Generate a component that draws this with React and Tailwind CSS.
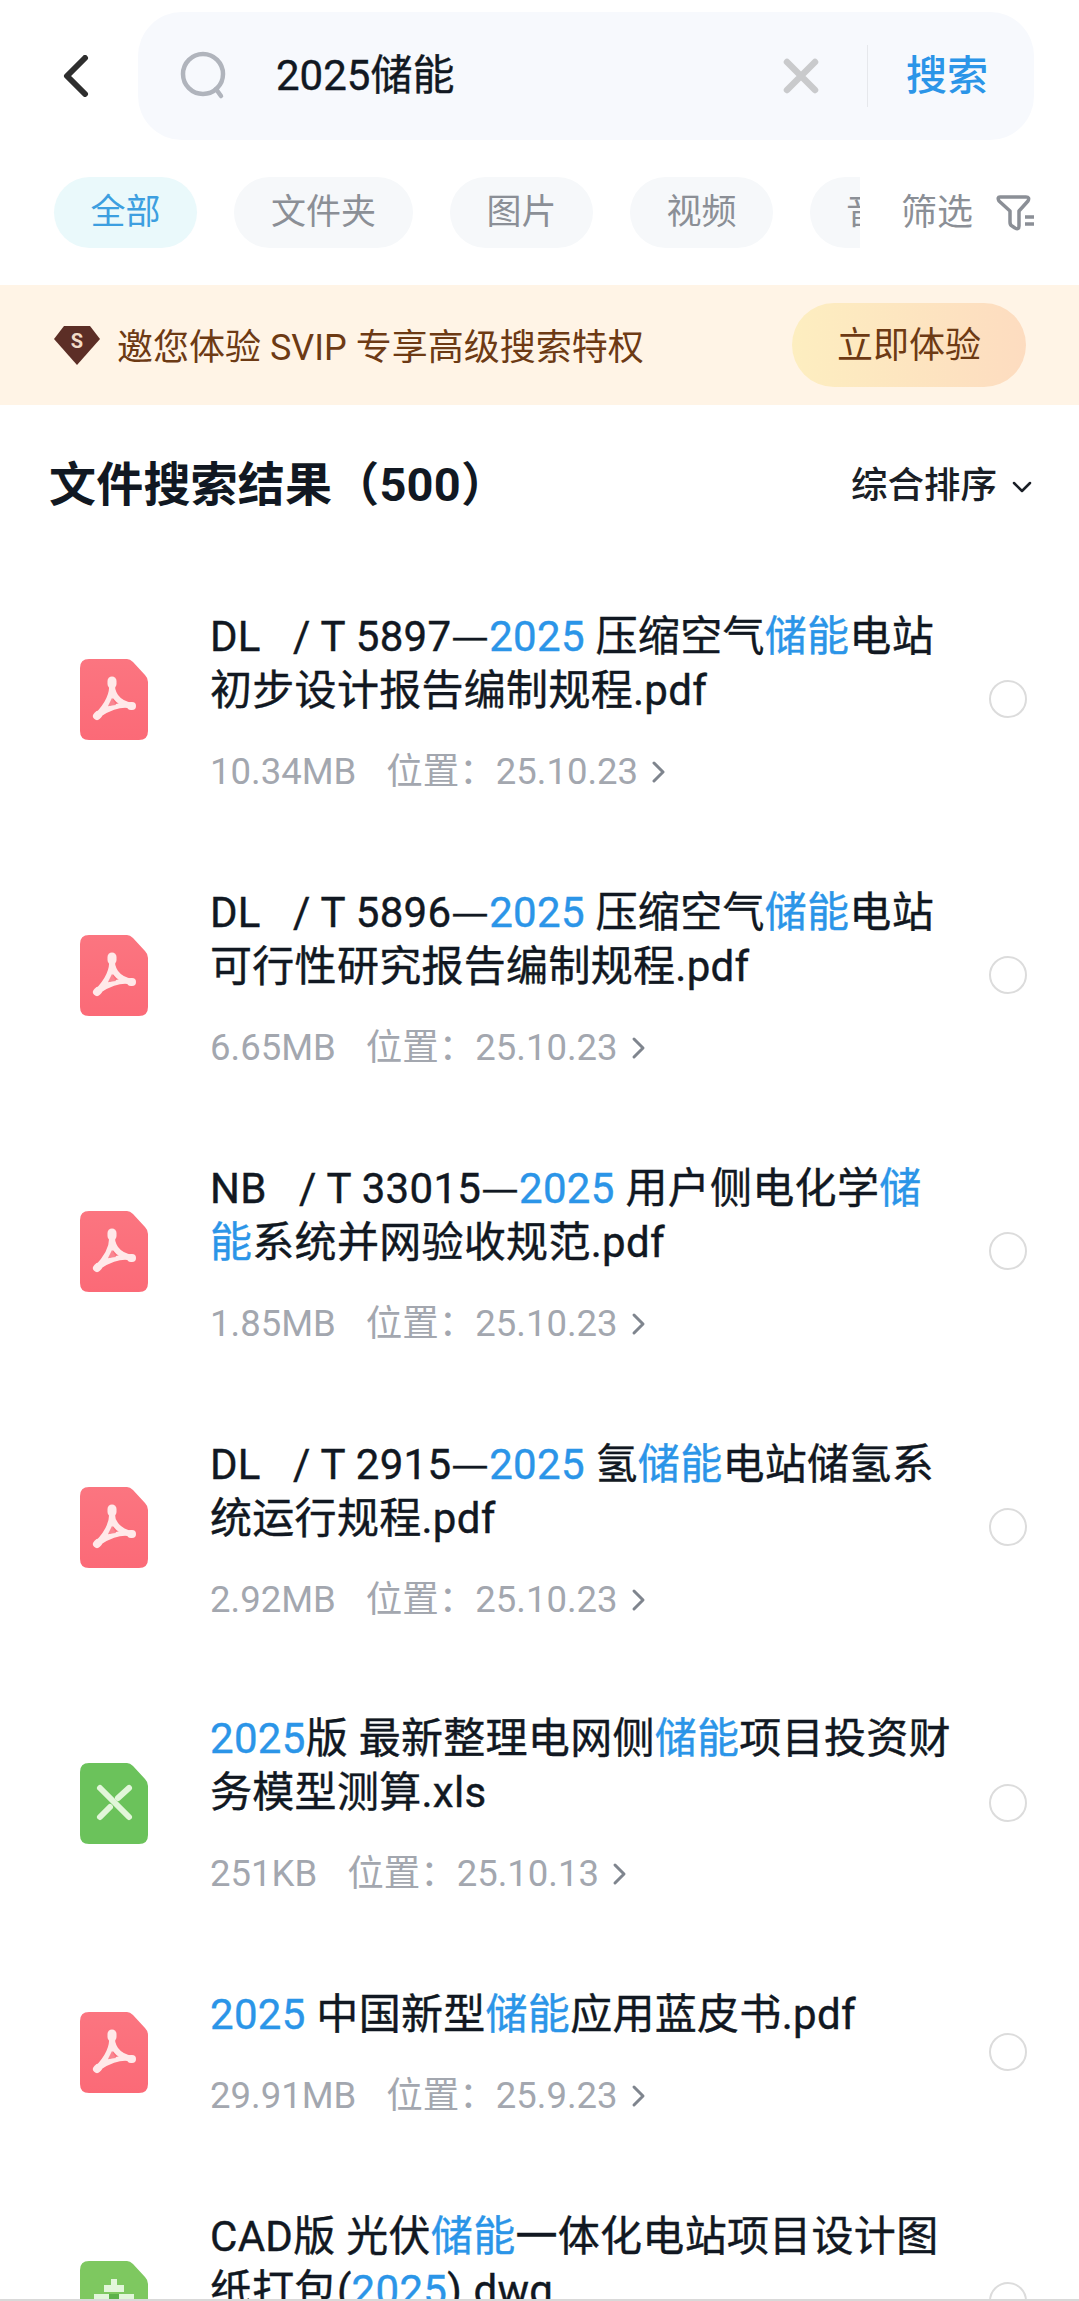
import React from "react";

const B = ({ children }) => <span className="text-[#2b95e8]">{children}</span>;
const D = () => <span className="font-['Noto_Sans_CJK_SC',sans-serif]">—</span>;

const Pdf = () => (
  <svg width="68" height="81" viewBox="0 0 68 81" className="block">
    <defs>
      <linearGradient id="pg" x1="0" y1="0" x2="0" y2="1">
        <stop offset="0" stopColor="#fb7580" />
        <stop offset="1" stopColor="#fb6a77" />
      </linearGradient>
    </defs>
    <path d="M9 0H47Q50 0 53 3L65 16Q68 19 68 23V72Q68 81 59 81H9Q0 81 0 72V9Q0 0 9 0Z" fill="url(#pg)" />
    <g fill="none" stroke="#ffe9e9" strokeLinecap="round">
      <path d="M32 24C33 33 30 44 17 57" strokeWidth="6" />
      <path d="M32 24C31 33 36 44 52 47" strokeWidth="6" />
      <path d="M17 57C26 50 40 44 52 47" strokeWidth="5" />
      <path d="M32 22V25" strokeWidth="9" />
      <path d="M17 57L18 56" strokeWidth="8" />
      <path d="M51 47L52 47" strokeWidth="8" />
    </g>
    <path d="M32 39L36 46L28 47Z" fill="#f98590" />
  </svg>
);

const Xls = () => (
  <svg width="68" height="81" viewBox="0 0 68 81" className="block">
    <path d="M9 0H47Q50 0 53 3L65 16Q68 19 68 23V72Q68 81 59 81H9Q0 81 0 72V9Q0 0 9 0Z" fill="#6bc25b" />
    <g fill="none" stroke="#e2f6da" strokeWidth="6" strokeLinecap="round">
      <path d="M20 25L49 54" />
      <path d="M49 25L38 35" />
      <path d="M30 44L20 54" />
    </g>
  </svg>
);

const Cad = () => (
  <svg width="68" height="81" viewBox="0 0 68 81" className="block">
    <path d="M9 0H47Q50 0 53 3L65 16Q68 19 68 23V72Q68 81 59 81H9Q0 81 0 72V9Q0 0 9 0Z" fill="#7ec860" />
    <path d="M31 18H37V24H44V31H24V24H31Z" fill="#e2f6da" />
    <path d="M14 33H54V45H14Z" fill="#e2f6da" />
    <path d="M29 33H39V45H29Z" fill="#5cb14a" />
  </svg>
);

const rows = [
  {
    icon: <Pdf />,
    lines: [<>DL   / T 5897<D /><B>2025</B> 压缩空气<B>储能</B>电站</>, <>初步设计报告编制规程.pdf</>],
    size: "10.34MB",
    date: "25.10.23",
  },
  {
    icon: <Pdf />,
    lines: [<>DL   / T 5896<D /><B>2025</B> 压缩空气<B>储能</B>电站</>, <>可行性研究报告编制规程.pdf</>],
    size: "6.65MB",
    date: "25.10.23",
  },
  {
    icon: <Pdf />,
    lines: [<>NB   / T 33015<D /><B>2025</B> 用户侧电化学<B>储</B></>, <><B>能</B>系统并网验收规范.pdf</>],
    size: "1.85MB",
    date: "25.10.23",
  },
  {
    icon: <Pdf />,
    lines: [<>DL   / T 2915<D /><B>2025</B> 氢<B>储能</B>电站储氢系</>, <>统运行规程.pdf</>],
    size: "2.92MB",
    date: "25.10.23",
  },
  {
    icon: <Xls />,
    lines: [<><B>2025</B>版 最新整理电网侧<B>储能</B>项目投资财</>, <>务模型测算.xls</>],
    size: "251KB",
    date: "25.10.13",
  },
  {
    icon: <Pdf />,
    lines: [<><B>2025</B> 中国新型<B>储能</B>应用蓝皮书.pdf</>],
    size: "29.91MB",
    date: "25.9.23",
  },
  {
    icon: <Cad />,
    lines: [<>CAD版 光伏<B>储能</B>一体化电站项目设计图</>, <>纸打包(<B>2025</B>).dwg</>],
    size: "",
    date: "",
  },
];

const Row = ({ r }) => (
  <div className={`flex items-center pl-[80px] pr-[52px] shrink-0 ${r.lines.length === 2 ? "h-[276px]" : "h-[222px]"}`}>
    <div className="w-[68px] shrink-0">{r.icon}</div>
    <div className="ml-[62px] flex-1 min-w-0">
      {r.lines.map((l, i) => (
        <div key={i} className="text-[42px] leading-[54px] tracking-[0.3px] [-webkit-text-stroke:0.4px] text-[#111822] whitespace-pre">{l}</div>
      ))}
      <div className="mt-[34px] h-[40px] flex items-center text-[36.5px] leading-[40px] text-[#a3a7af] whitespace-nowrap">
        <span>{r.size}</span>
        <span className="ml-[30px]">位置：{r.date}</span>
        <svg width="18" height="26" viewBox="0 0 18 26" className="ml-[12px]">
          <path d="M4 4L13 13L4 22" fill="none" stroke="#7f858e" strokeWidth="3" strokeLinecap="round" strokeLinejoin="round" />
        </svg>
      </div>
    </div>
    <div className="w-[38px] h-[38px] rounded-full border-[2px] border-[#dcdcdc] shrink-0" />
  </div>
);

const Chip = ({ active, children, w }) => (
  <div className={`h-[71px] rounded-[36px] shrink-0 flex items-center justify-center pt-[2px] text-[35px] whitespace-nowrap overflow-hidden ${w} ${active ? "bg-[#eaf9fb] text-[#3d9fe0]" : "bg-[#f6f8fa] text-[#8b8f96]"}`}>
    {children}
  </div>
);

export default function App() {
  return (
    <div className="relative w-[1079px] h-[2301px] overflow-hidden bg-white flex flex-col font-['Roboto','Noto_Sans_CJK_SC',sans-serif]">
      <div className="h-[177px] shrink-0 pt-[12px] flex items-start">
        <div className="w-[138px] h-[128px] shrink-0 flex items-center pl-[62px]">
          <svg width="28" height="42" viewBox="0 0 28 42">
            <path d="M23 3L5 21L23 39" fill="none" stroke="#2e2e2e" strokeWidth="6" strokeLinecap="round" strokeLinejoin="round" />
          </svg>
        </div>
        <div className="w-[896px] h-[128px] rounded-[44px] bg-[#f7f9fd] flex items-center">
          <svg width="50" height="50" viewBox="0 0 50 50" className="ml-[41px] shrink-0">
            <circle cx="24" cy="23" r="20" fill="none" stroke="#b0b4bc" strokeWidth="4.5" />
            <path d="M37 38L42 45" fill="none" stroke="#b0b4bc" strokeWidth="4.5" strokeLinecap="round" />
          </svg>
          <div className="ml-[47px] text-[42px] leading-none [-webkit-text-stroke:0.4px] text-[#111822] whitespace-nowrap">2025储能</div>
          <div className="flex-1" />
          <svg width="36" height="36" viewBox="0 0 36 36" className="shrink-0">
            <path d="M4 4L32 32M32 4L4 32" fill="none" stroke="#c9cacc" strokeWidth="6.5" strokeLinecap="round" />
          </svg>
          <div className="ml-[48px] w-[1px] h-[62px] bg-[#e6e8ec] shrink-0" />
          <div className="ml-[38px] mr-[46px] text-[41px] leading-none font-medium text-[#2b95e8] whitespace-nowrap">搜索</div>
        </div>
      </div>
      <div className="h-[108px] shrink-0 flex items-start">
        <div className="w-[860px] shrink-0 overflow-hidden flex gap-[37px] pl-[54px]">
          <Chip active w="w-[143px]">全部</Chip>
          <Chip w="w-[179px]">文件夹</Chip>
          <Chip w="w-[143px]">图片</Chip>
          <Chip w="w-[143px]">视频</Chip>
          <Chip w="w-[142px]">音频</Chip>
        </div>
        <div className="h-[71px] flex items-center pl-[41px]">
          <span className="text-[36px] text-[#8b8f96] whitespace-nowrap">筛选</span>
          <svg width="40" height="38" viewBox="0 0 40 38" className="ml-[23px]">
            <path d="M4 3H30Q34 3 32 7L23 17V32Q23 36 19 34L16 32Q14 31 14 28V17L3 7Q1 3 4 3Z" fill="none" stroke="#8b8f96" strokeWidth="3.5" strokeLinejoin="round" />
            <path d="M29 23H38M29 30H38" stroke="#8b8f96" strokeWidth="3.5" />
          </svg>
        </div>
      </div>
      <div className="h-[120px] shrink-0 bg-[#fff4e6] flex items-center pl-[54px] pr-[53px]">
        <svg width="46" height="40" viewBox="0 0 46 40" className="shrink-0">
          <path d="M10 1H36L46 14L23 40L0 14Z" fill="#5c2e26" />
          <text x="23" y="23" textAnchor="middle" fontSize="20" fontWeight="700" fill="#f3dcc8" fontFamily="Roboto">S</text>
        </svg>
        <div className="ml-[17px] pt-[5px] text-[36px] leading-none text-[#6d3a14] whitespace-nowrap">邀您体验 SVIP 专享高级搜索特权</div>
        <div className="flex-1" />
        <div className="w-[234px] h-[84px] rounded-[42px] bg-gradient-to-r from-[#fdeec0] to-[#fddcc0] flex items-center justify-center pt-[2px] text-[36px] text-[#6d3a14] whitespace-nowrap">立即体验</div>
      </div>
      <div className="h-[156px] shrink-0 pl-[49px] pr-[46px] pt-[46px] flex items-start justify-between">
        <div className="text-[47px] leading-[68px] font-bold tracking-[0.2px] text-[#111822] whitespace-nowrap">文件搜索结果（500）</div>
        <div className="h-[68px] pt-[3px] flex items-center">
          <span className="text-[36.5px] text-[#1a1f27] whitespace-nowrap font-medium">综合排序</span>
          <svg width="22" height="14" viewBox="0 0 22 14" className="ml-[14px]">
            <path d="M3 3L11 11L19 3" fill="none" stroke="#1a1f27" strokeWidth="2.5" strokeLinecap="round" strokeLinejoin="round" />
          </svg>
        </div>
      </div>
      <div className="flex flex-col">
        {rows.map((r, i) => <Row key={i} r={r} />)}
      </div>
      <div className="absolute left-0 right-0 bottom-0 h-[2px] bg-[#d9d9d9]" />
    </div>
  );
}
